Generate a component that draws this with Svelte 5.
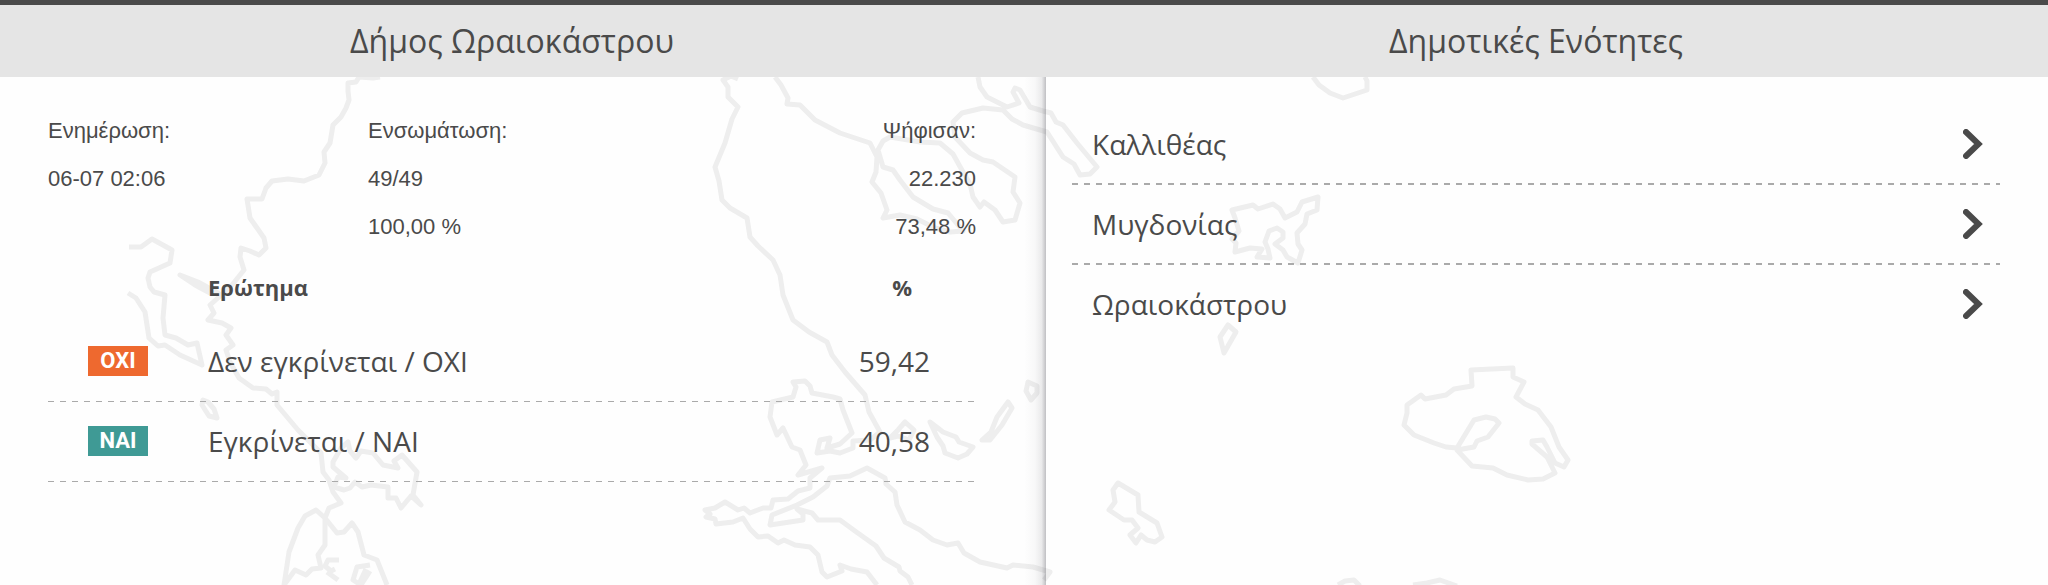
<script>
  const municipality = "Δήμος Ωραιοκάστρου";

  const info = [
    { label: "Ενημέρωση:", values: ["06-07 02:06"] },
    { label: "Ενσωμάτωση:", values: ["49/49", "100,00 %"] },
    { label: "Ψήφισαν:", values: ["22.230", "73,48 %"] },
  ];

  const results = [
    { badge: "ΟΧΙ", kind: "no", name: "Δεν εγκρίνεται / ΟΧΙ", percent: "59,42" },
    { badge: "ΝΑΙ", kind: "yes", name: "Εγκρίνεται / ΝΑΙ", percent: "40,58" },
  ];

  const units = ["Καλλιθέας", "Μυγδονίας", "Ωραιοκάστρου"];

  // coastlines and islands of the background map
  const coasts = [
    "M380 77L373 78L359 77L356 82L348 83L348 91L349 100L346 108L341 117L333 125L330 143L324 152L325 163L319 175L304 181L288 179L272 181L266 188L262 199L247 199L250 218L264 238L266 248L259 255L250 251L241 248L240 257L244 270L232 285L219 297L210 305L214 313L208 320L222 323L231 328L226 335L233 345L226 350L230 362L239 378L253 388L266 389L272 394L277 392L277 405L298 430L321 453L323 472L329 480L333 492L341 503L329 508L325 518L337 533L344 532L352 523L358 532L364 555L377 560L387 585",
    "M316 510L305 516L298 528L289 552L284 585L295 570L306 575L312 569L321 568L318 555L325 545L325 518Z",
    "M339 560L328 560L325 566L331 571L335 569M327 572L338 580M370 565L357 567L353 580L361 585L370 571M366 569L359 584",
    "M333 467L333 462L341 448L348 442L350 451L356 458L361 451L373 453L383 465L398 468L394 461L402 455L417 472L413 495L421 505L411 496L401 508L396 498L388 498L388 487L371 485L362 487L355 482L350 488L344 490L334 487L338 477L346 478Z",
    "M129 247L141 247L152 239L172 250L170 263L150 272L148 278L150 287L154 292L165 295L163 318L165 335L176 338L188 345L197 343L202 365L180 355L165 345L158 346L149 338L145 312L136 298L128 293",
    "M180 275L198 282L218 293L210 293L195 285ZM203 400L202 405L209 416L217 418L214 409L208 402Z",
    "M738 79L731 76L723 80L728 87L728 97L738 107L732 119L725 143L715 167L719 181L722 200L730 208L747 218L750 237L758 246L773 260L780 275L783 295L793 320L809 332L827 342L832 355L845 372L865 395L869 412L880 432L870 440L853 441L853 448L840 453L830 451L817 453L820 440L830 438L827 448L840 444L852 433L843 410L840 399L833 397L812 393L810 386L805 381L793 382L796 387L793 397L772 402L770 417L777 435L783 428L792 447L800 450L806 465L798 475L822 468L810 478L810 488L798 491L788 499L773 500L771 508L763 508L750 513L744 508L738 510L725 502L715 508L705 510L710 514L706 517L715 519L716 524L733 522L743 518L750 529L758 537L768 536L778 543L784 540L795 545L810 547L818 555L822 572L827 577L842 571L840 565L851 569L867 572L877 585",
    "M912 585L908 577L900 571L899 567L884 558L876 546L855 531L840 520L818 520L812 513L797 509L803 514L803 520L770 525L772 515L797 505L813 497L827 486L830 478L850 476L867 468L885 478L886 484L895 492L897 505L905 522L920 530L933 540L947 545L958 543L964 553L980 562L1007 568L1013 565L1033 567L1050 572L1044 580",
    "M775 77L781 85L788 98L787 104L800 105L815 120L840 133L870 143L877 157L876 172L872 182L881 193L887 210L883 218L900 215L917 219L935 228L950 232L963 231L948 213L933 209L913 197L900 180L893 170L883 167L878 150L883 141L890 137L920 142L940 143L953 154L963 172L970 184L973 197L980 207L984 202L995 210L1003 222L1015 220L1020 203L1013 192L1015 177L993 162L983 160L970 153L955 137L953 122L962 113L983 108L1003 110L1012 119L1023 125L1047 132L1063 157L1074 164L1080 175L1090 174L1097 167L1077 143L1063 125L1056 122L1051 113L1043 111L1030 107L1020 90L1015 88L1013 92L1019 103L1007 107L987 97L980 87L978 77",
    "M890 438L898 430L905 422L914 430L909 440L898 436ZM930 422L943 432L956 437L959 442L973 447L967 454L958 458L945 453L943 446L937 437Z",
    "M1008 402L1012 408L1002 425L990 440L982 440L991 432L997 417ZM1028 382L1026 391L1031 400L1037 393L1037 386Z",
    "M1313 77L1319 85L1330 93L1343 98L1367 90L1367 81L1365 77",
    "M1232 210L1253 205L1258 209L1273 204L1280 209L1285 218L1297 212L1302 202L1318 197L1317 210L1307 214L1305 224L1297 233L1298 244L1302 250L1298 263L1287 257L1283 250L1275 244L1283 238L1283 232L1277 228L1269 231L1265 242L1268 249L1270 258L1257 257L1262 249L1250 248L1235 252L1236 243L1232 239L1239 231L1235 218Z",
    "M1228 325L1236 332L1224 353L1220 337Z",
    "M1471 370L1513 368L1513 377L1524 382L1516 397L1525 404L1538 410L1551 427L1559 447L1568 460L1564 467L1555 463L1547 447L1543 440L1532 441L1532 444L1547 457L1555 473L1543 479L1528 480L1507 475L1493 468L1472 466L1457 450L1474 447L1477 441L1488 437L1499 423L1495 419L1486 417L1474 420L1457 448L1446 447L1434 443L1414 435L1404 425L1407 413L1407 405L1421 395L1425 399L1446 395L1454 389L1472 386Z",
    "M1118 483L1138 495L1139 512L1157 523L1162 537L1155 542L1147 540L1141 535L1136 543L1130 535L1138 528L1132 520L1124 520L1109 510L1115 502L1113 490Z",
    "M1338 585L1345 581L1354 580L1360 586M1413 585L1427 583L1440 580L1457 586",
  ];
</script>

<div class="page">
  <header>
    <h1>{municipality}</h1>
    <h2>Δημοτικές Ενότητες</h2>
  </header>
  <main>
    <svg
      class="map"
      viewBox="0 77 2048 508"
      preserveAspectRatio="xMinYMin slice"
      aria-hidden="true"
    >
      {#each coasts as coast}
        <path d={coast} />
      {/each}
    </svg>

    <section class="results">
      <div class="info">
        {#each info as column}
          <div>
            <p>{column.label}</p>
            {#each column.values as value}
              <p>{value}</p>
            {/each}
          </div>
        {/each}
      </div>
      <table>
        <thead>
          <tr>
            <td class="option"></td>
            <th class="name" scope="col">Ερώτημα</th>
            <th class="percent" scope="col">%</th>
          </tr>
        </thead>
        <tbody>
          {#each results as result}
            <tr>
              <td class="option">
                <span class="badge {result.kind}">{result.badge}</span>
              </td>
              <td class="name">{result.name}</td>
              <td class="percent">{result.percent}</td>
            </tr>
          {/each}
        </tbody>
      </table>
    </section>

    <nav class="units">
      <ul>
        {#each units as unit}
          <li>
            <a href="#{unit}">
              {unit}
              <svg class="chevron" viewBox="0 0 20 30" aria-hidden="true">
                <path d="M3 3L15.5 15L3 27" />
              </svg>
            </a>
          </li>
        {/each}
      </ul>
    </nav>
  </main>
</div>

<style>
  :global(body) {
    margin: 0;
    background: #fefefe;
  }
  .page {
    --dashes: repeating-linear-gradient(
      90deg,
      #aaa 0 6px,
      transparent 6px 12px
    );
    display: flex;
    flex-direction: column;
    min-height: 100vh;
    box-sizing: border-box;
    border-top: 5px solid #4a4a4a;
    color: #4a4a4a;
    font-family: "Open Sans", "Noto Sans", sans-serif;
    font-size: 28px;
  }

  header {
    display: grid;
    grid-template-columns: 1fr 1fr;
    background: #e5e5e5;
    text-align: center;
  }
  h1,
  h2 {
    margin: 0;
    font-size: 32px;
    font-weight: 400;
    line-height: 72px;
  }

  main {
    position: relative;
    flex: 1;
    display: grid;
    grid-template-columns: 1fr 1fr;
  }
  .map {
    position: absolute;
    inset: 0;
    width: 100%;
    height: 100%;
    overflow: hidden;
  }
  .map path {
    fill: none;
    stroke: #eeeeee;
    stroke-width: 5;
    stroke-linejoin: round;
  }
  .results,
  .units {
    position: relative;
  }

  .results {
    padding: 30px 48px;
  }
  .info {
    display: grid;
    grid-template-columns: repeat(3, 1fr);
    gap: 32px;
    font-family: "Liberation Sans", Arial, sans-serif;
    font-size: 22px;
    line-height: 48px;
  }
  .info div:last-child {
    text-align: right;
  }
  .info p {
    margin: 0;
  }

  table {
    width: 100%;
    border-collapse: collapse;
  }
  th,
  td {
    height: 80px;
    padding: 0 0 2px;
    box-sizing: border-box;
    text-align: left;
  }
  thead th,
  thead td {
    height: 71px;
    padding-bottom: 0;
    font-size: 22px;
  }
  tbody td {
    background: var(--dashes) left bottom / 100% 1px no-repeat;
  }
  .option {
    width: 140px;
    text-align: center;
  }
  .name {
    padding-left: 20px;
  }
  .percent {
    width: 164px;
    padding-right: 46px;
    text-align: right;
  }
  th.percent {
    padding-right: 64px;
  }
  .badge {
    display: block;
    width: 60px;
    margin: 0 auto;
    color: #fff;
    font-family: Roboto, sans-serif;
    font-size: 22px;
    font-weight: 700;
    line-height: 30px;
  }
  .badge.no {
    background: #ee692f;
  }
  .badge.yes {
    background: #3f9a95;
  }

  .units {
    padding: 28px 48px;
    background: linear-gradient(
        90deg,
        rgba(60, 60, 70, 0),
        rgba(60, 60, 70, 0.03) 50%,
        rgba(60, 60, 70, 0.1) 80%,
        rgba(60, 60, 70, 0.32)
      )
      left top / 22px 100% no-repeat;
  }
  ul {
    margin: 0;
    padding: 0;
    list-style: none;
  }
  li + li {
    padding-top: 2px;
    background: var(--dashes) left top / 100% 2px no-repeat;
  }
  a {
    display: flex;
    align-items: center;
    justify-content: space-between;
    height: 78px;
    padding: 0 17px 0 20px;
    color: inherit;
    text-decoration: none;
  }
  .chevron {
    width: 20px;
    height: 30px;
  }
  .chevron path {
    fill: none;
    stroke: #4a4a4a;
    stroke-width: 6;
    stroke-linecap: round;
  }
</style>
